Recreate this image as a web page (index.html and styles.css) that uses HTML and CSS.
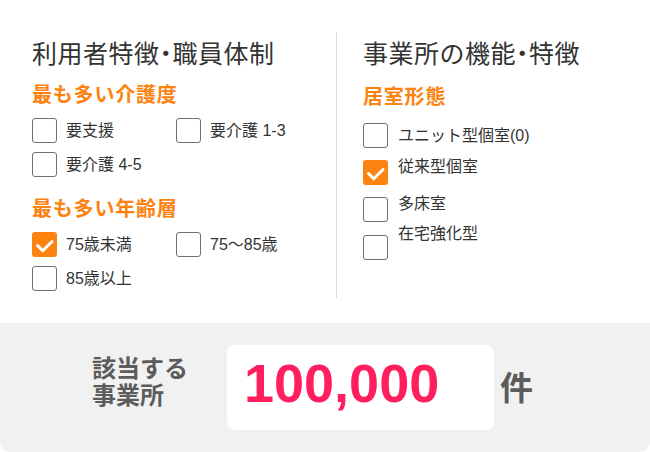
FILE: index.html
```html
<!DOCTYPE html>
<html lang="ja">
<head>
<meta charset="utf-8">
<link rel="stylesheet" href="styles.css">
</head>
<body>
<div class="card">
  <div class="top">
    <section class="col col-left">
      <h2 class="title">利用者特徴<span class="dot">・</span>職員体制</h2>
      <h3 class="head head-first">最も多い介護度</h3>
      <div class="grid">
        <label class="item"><span class="box"></span><span class="txt">要支援</span></label>
        <label class="item"><span class="box"></span><span class="txt">要介護 1-3</span></label>
        <label class="item"><span class="box"></span><span class="txt">要介護 4-5</span></label>
      </div>
      <h3 class="head head-second">最も多い年齢層</h3>
      <div class="grid">
        <label class="item"><span class="box box-on"><svg viewBox="0 0 25 25" width="25" height="25"><polyline points="5.5,13.5 10.8,18.8 20,9.5" fill="none" stroke="#fff" stroke-width="3" stroke-linecap="round" stroke-linejoin="round"/></svg></span><span class="txt">75歳未満</span></label>
        <label class="item"><span class="box"></span><span class="txt">75～85歳</span></label>
        <label class="item"><span class="box"></span><span class="txt">85歳以上</span></label>
      </div>
    </section>
    <section class="col col-right">
      <h2 class="title">事業所の機能<span class="dot">・</span>特徴</h2>
      <h3 class="head head-right">居室形態</h3>
      <div class="list">
        <label class="ritem ritem-1"><span class="box"></span><span class="txt">ユニット型個室(0)</span></label>
        <label class="ritem ritem-2"><span class="box box-on"><svg viewBox="0 0 25 25" width="25" height="25"><polyline points="5.5,13.5 10.8,18.8 20,9.5" fill="none" stroke="#fff" stroke-width="3" stroke-linecap="round" stroke-linejoin="round"/></svg></span><span class="txt">従来型個室</span></label>
        <label class="ritem ritem-3"><span class="box"></span><span class="txt">多床室</span></label>
        <label class="ritem ritem-4"><span class="box"></span><span class="txt">在宅強化型</span></label>
      </div>
    </section>
  </div>
  <div class="result">
    <div class="result-label"><div class="rl-line">該当する</div><div class="rl-line">事業所</div></div>
    <div class="result-box">100,000</div>
    <div class="result-unit">件</div>
  </div>
</div>
</body>
</html>
```
FILE: styles.css
```css
* { box-sizing: border-box; }
html, body { margin: 0; padding: 0; background: #fff; }
body {
  font-family: "Liberation Sans", "Noto Sans CJK JP", sans-serif;
  color: #333;
}
.card {
  width: 650px;
  height: 452px;
  display: flex;
  flex-direction: column;
}
.top {
  display: flex;
  padding: 32px 0 25px 0;
  height: 323px;
}
.col { height: 266px; }
.col-left {
  width: 337px;
  padding-left: 32px;
  border-right: 1px solid #dedede;
}
.col-right {
  flex: 1;
  padding-left: 26px;
}
.title {
  margin: 4px 0 0 0;
  font-family: "Noto Sans CJK JP", sans-serif;
  font-weight: 400;
  font-size: 25px;
  line-height: 32px;
  letter-spacing: 0.5px;
  color: #333;
}
.dot { font-feature-settings: "halt"; }
.head {
  margin: 0;
  font-family: "Noto Sans CJK JP", sans-serif;
  font-weight: 700;
  font-size: 20px;
  line-height: 24px;
  letter-spacing: 0.8px;
  color: #fd8311;
}
.head-first { margin-top: 14px; }
.head-second { margin-top: 19px; }
.head-right { margin-top: 16px; }
.grid {
  margin-top: 12px;
  display: grid;
  grid-template-columns: 144px 1fr;
  row-gap: 9px;
}
.item {
  display: flex;
  align-items: center;
  gap: 9px;
  height: 25px;
}
.box {
  flex: none;
  width: 25px;
  height: 25px;
  border: 1.5px solid #707070;
  border-radius: 3px;
  background: #fff;
  display: block;
}
.box-on {
  border: none;
  background: #fd8311;
}
.box svg { display: block; }
.txt {
  font-size: 16px;
  line-height: 20px;
  color: #333;
  white-space: nowrap;
}
.list { display: flex; flex-direction: column; }
.ritem {
  display: flex;
  gap: 10px;
  align-items: flex-start;
}
.ritem-1 { margin-top: 15px; align-items: center; height: 25px; }
.ritem-2 { margin-top: 12px; height: 25px; }
.ritem-2 .txt { margin-top: -3px; }
.ritem-3 { margin-top: 12px; height: 25px; }
.ritem-3 .txt { margin-top: -3px; }
.ritem-4 { margin-top: 2px; }
.ritem-4 .box { margin-top: 11px; }
.result {
  height: 129px;
  background: #f1f1f1;
  border-radius: 0 0 10px 10px;
  display: flex;
  align-items: center;
  padding-left: 92px;
}
.result-label {
  font-family: "Noto Sans CJK JP", sans-serif;
  font-weight: 700;
  font-size: 24px;
  color: #5c5c5c;
  width: 135px;
  margin-top: -16px;
}
.rl-line { height: 27px; line-height: 27px; }
.result-box {
  width: 267px;
  height: 85px;
  background: #fff;
  border-radius: 8px;
  padding: 10px 0 0 17px;
  font-family: "Liberation Sans", sans-serif;
  font-weight: 700;
  font-size: 54px;
  line-height: 56px;
  color: #ff1e5e;
}
.result-unit {
  margin-left: 6px;
  margin-top: -4px;
  font-family: "Noto Sans CJK JP", sans-serif;
  font-weight: 700;
  font-size: 33px;
  line-height: 40px;
  color: #5c5c5c;
}
```
